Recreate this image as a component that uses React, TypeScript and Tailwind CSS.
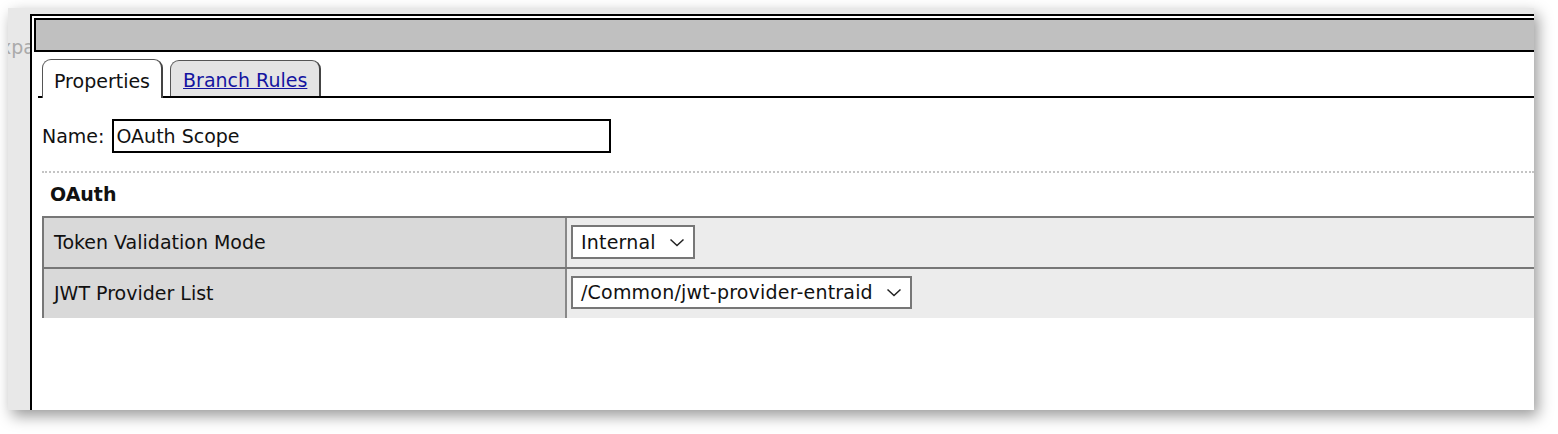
import React from 'react';

const font = { fontFamily: '"DejaVu Sans", Verdana, sans-serif' };

function Chevron() {
  return (
    <svg width="16" height="9" viewBox="0 0 16 9" className="shrink-0">
      <path d="M1.5 1.5l6.5 6 6.5-6" fill="none" stroke="#222" strokeWidth="1.5" />
    </svg>
  );
}

function Select({ value, height }: { value: string; height: string }) {
  return (
    <div className={`inline-flex items-center gap-[13px] bg-white border-2 border-[#777] pl-[8px] pr-[8px] ${height}`}>
      <span className="tracking-[0.2px]">{value}</span>
      <Chevron />
    </div>
  );
}

export default function App() {
  return (
    <div className="w-[1558px] h-[434px] bg-white pt-[8px] pl-[8px] text-[19px] text-[#111]" style={font}>
      <div className="w-[1526px] h-[402px] bg-[#e8e8e8] flex overflow-hidden shadow-[4px_6px_14px_rgba(0,0,0,0.4)]">
        {/* clipped sidebar */}
        <div className="w-[22px] shrink-0 overflow-hidden pt-[26px]">
          <span className="block -ml-[8px] text-[#aaa] leading-[26px] whitespace-nowrap">xpa</span>
        </div>

        {/* panel */}
        <div className="flex-1 mt-[6px] border-l-2 border-t-2 border-black bg-white pl-[2px] pt-[2px]">
          <div className="h-[34px] bg-[#c0c0c0] border-2 border-r-0 border-black" />

          {/* tabs */}
          <div className="mt-[7px] ml-[4px] pl-[4px] flex items-end gap-[7px] h-[39px] border-b-2 border-black">
            <div className="relative z-10 h-[39px] -mb-[2px] bg-white border border-b-0 border-[#555] border-r-2 border-r-[#444] rounded-t-[9px] px-[11px] pt-[4px] flex items-center">
              Properties
            </div>
            <div className="h-[36px] bg-[#e4e4e4] border border-b-0 border-[#555] border-r-2 border-r-[#444] rounded-t-[9px] px-[12px] pt-[4px] flex items-center">
              <span className="text-[#1414a0] underline">Branch Rules</span>
            </div>
          </div>

          {/* name */}
          <div className="mt-[21px] pl-[8px] flex items-center gap-[8px]">
            <span className="pt-[1px]">Name:</span>
            <div className="w-[499px] h-[34px] border-2 border-black px-[2px] pt-[1px] flex items-center">OAuth Scope</div>
          </div>

          <div className="mt-[18px] ml-[8px] border-t-2 border-dotted border-[#c4c4c4]" />

          <div className="h-[43px] pl-[16px] flex items-center font-bold">OAuth</div>

          {/* table */}
          <div className="ml-[8px] border-t-2 border-l-2 border-[#777]">
            <div className="flex h-[51px] border-b-2 border-[#777]">
              <div className="w-[521px] shrink-0 bg-[#d9d9d9] pl-[10px] flex items-center">Token Validation Mode</div>
              <div className="flex-1 bg-[#ececec] border-l-2 border-[#888] pl-[4px] pt-[7px]">
                <Select value="Internal" height="h-[34px]" />
              </div>
            </div>
            <div className="flex h-[49px]">
              <div className="w-[521px] shrink-0 bg-[#d9d9d9] pl-[10px] flex items-center">JWT Provider List</div>
              <div className="flex-1 bg-[#ececec] border-l-2 border-[#888] pl-[4px] pt-[7px]">
                <Select value="/Common/jwt-provider-entraid" height="h-[33px]" />
              </div>
            </div>
          </div>
        </div>
      </div>
    </div>
  );
}
